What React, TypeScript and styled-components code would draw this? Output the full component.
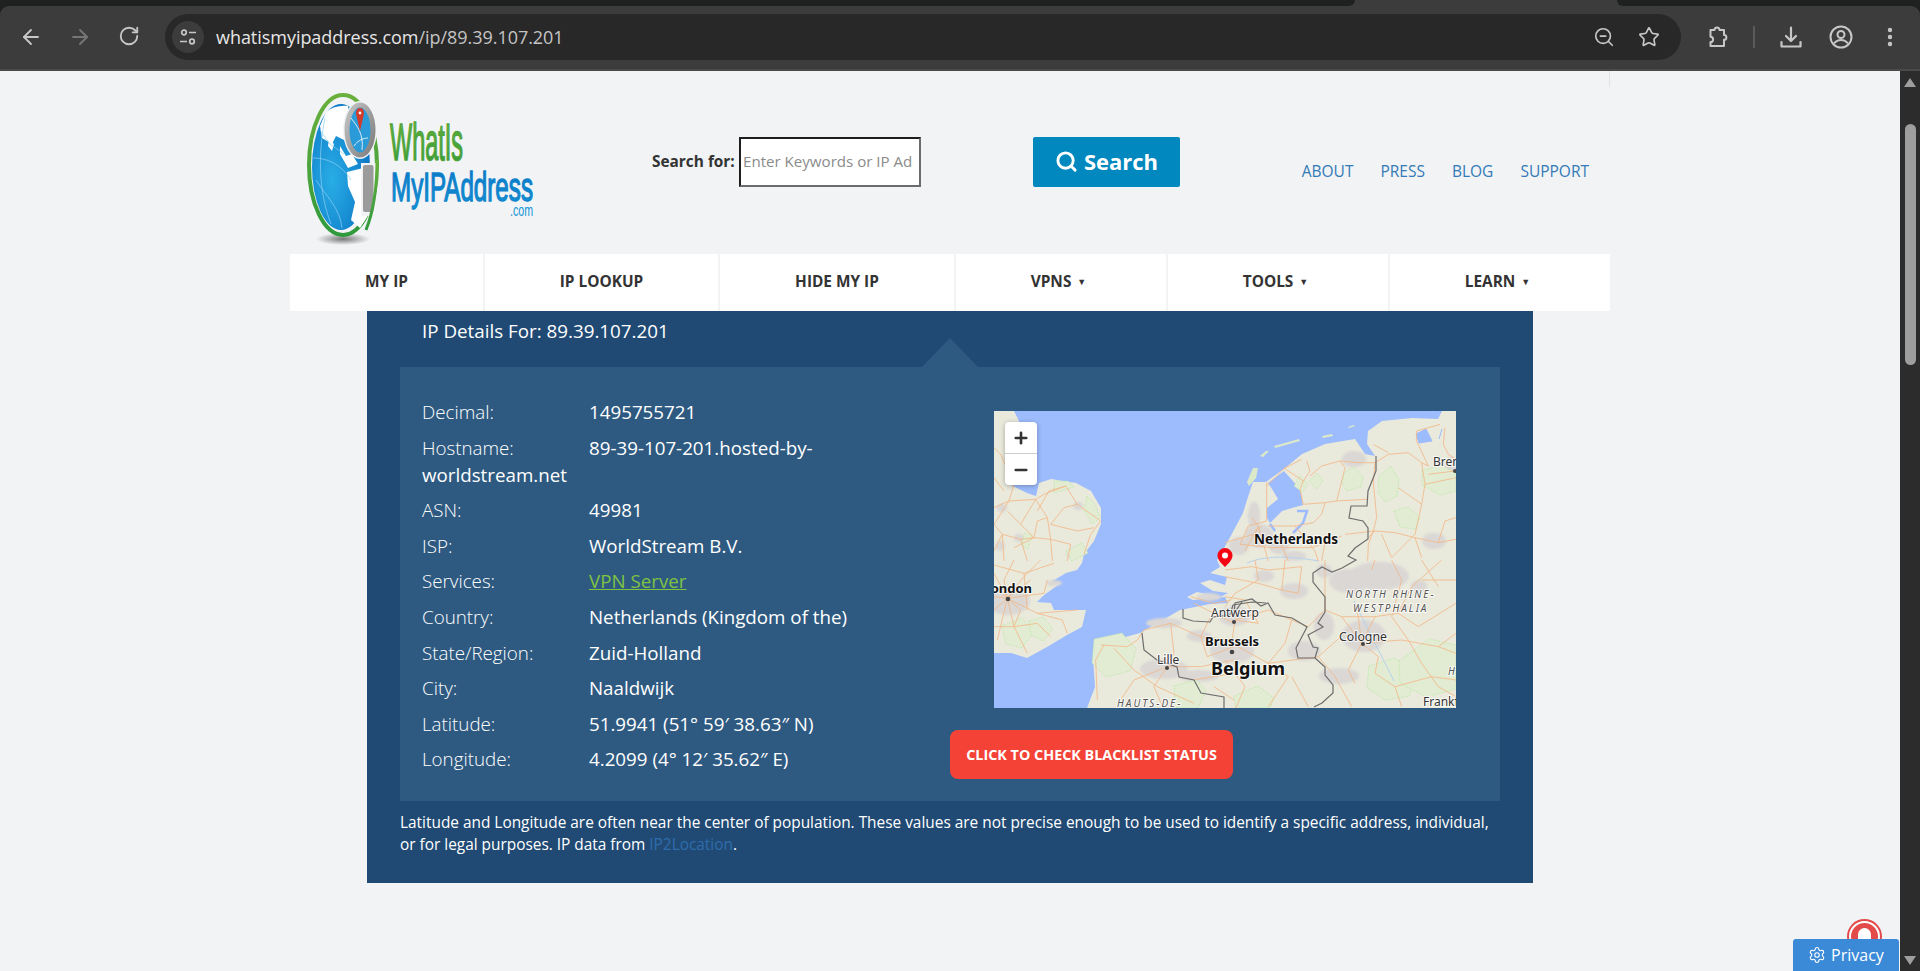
import { ArrowLeft, ArrowRight, EllipsisVertical, Minus, Plus, RotateCw, Search, Settings, Star, ZoomOut } from "lucide-react"
import styled, { createGlobalStyle } from "styled-components"

const GlobalStyle = createGlobalStyle`
  html, body {
    margin: 0;
    padding: 0;
    height: 971px;
    overflow: hidden;
    background: #f1f3f5;
    font-family: "Open Sans", "Liberation Sans", sans-serif;
  }
  * { box-sizing: border-box; }
`

const Shell = styled.div`
  width: 1920px;
  height: 971px;
  position: relative;
  overflow: hidden;
  display: flex;
  flex-direction: column;
`

/* browser chrome */
const Chrome = styled.div`
  height: 71px;
  flex: none;
  background: #1f2120;
  display: flex;
  flex-direction: column;
`
const TabStrip = styled.div`
  height: 6px;
  background: #3c3c3c;
  display: flex;
`
const StripEnd = styled.div<{ $left?: boolean }>`
  background: #1f2120;
  height: 6px;
  ${({ $left }) => ($left ? "width: 1355px; border-bottom-right-radius: 6px;" : "margin-left: 262px; flex: 1; border-bottom-left-radius: 6px;")}
`
const Toolbar = styled.div`
  flex: 1;
  background: #3c3c3c;
  border-radius: 9px 9px 0 0;
  border-bottom: 2px solid #4a4a4a;
  display: flex;
  align-items: center;
  padding: 0 0 1px 19px;
  color: #c7c7c7;
`
const NavIcon = styled.div<{ $dim?: boolean; $gap: number }>`
  width: 24px;
  height: 24px;
  margin-right: ${({ $gap }) => $gap}px;
  color: ${({ $dim }) => ($dim ? "#767676" : "#c7c7c7")};
  display: flex;
`
const AddressBar = styled.div`
  width: 1516px;
  height: 46px;
  margin-left: -2px;
  border-radius: 23px;
  background: #282828;
  display: flex;
  align-items: center;
  padding-left: 7px;
`
const TuneChip = styled.div`
  width: 32px;
  height: 32px;
  border-radius: 50%;
  background: #3c3c3c;
  display: flex;
  align-items: center;
  justify-content: center;
`
const Url = styled.div`
  margin-left: 12px;
  font-size: 18px;
  color: #e6e6e6;
  flex: 1;
  letter-spacing: -0.04px;
  span { color: #c4c4c4; }
`
const BarIcon = styled.div<{ $gap: number }>`
  width: 22px;
  height: 22px;
  display: flex;
  margin-right: ${({ $gap }) => $gap}px;
`
const ToolIcon = styled.div<{ $gap: number }>`
  width: 24px;
  height: 24px;
  display: flex;
  flex: none;
  margin-left: ${({ $gap }) => $gap}px;
`
const ToolDivider = styled.div`
  width: 2px;
  height: 22px;
  margin-left: 24px;
  background: #5a5a5a;
`

/* page */
const Viewport = styled.div`
  flex: 1;
  display: flex;
  min-height: 0;
`
const Page = styled.main`
  flex: 1;
  background: #f1f3f5;
`
const Wrap = styled.div`
  width: 1320px;
  margin: 0 auto;
`
const Header = styled.header`
  height: 183px;
  position: relative;
  display: flex;
  align-items: flex-start;
  &::after {
    content: "";
    position: absolute;
    top: 0;
    right: 0;
    width: 1px;
    height: 16px;
    background: #e0e3e6;
  }
`
const LogoBox = styled.div`
  width: 240px;
  height: 155px;
  margin: 19px 0 0 10px;
  flex: none;
`
const SearchForm = styled.form`
  display: flex;
  align-items: center;
  margin: 66px 0 0 112px;
`
const SearchLabel = styled.label`
  font-size: 15.4px;
  font-weight: 700;
  color: #333;
  width: 87px;
  padding-bottom: 2px;
  white-space: nowrap;
`
const SearchInput = styled.input`
  width: 182px;
  height: 50px;
  padding: 0 6px 2px 2px;
  border: 2px solid;
  border-color: #1e1e1e #6c6c6c #6c6c6c #1e1e1e;
  background: #fff;
  font-family: inherit;
  font-size: 15.1px;
  &::placeholder { color: #8b8b8b; opacity: 1; }
`
const SearchButton = styled.button`
  width: 147px;
  height: 50px;
  margin-left: 112px;
  padding: 0 0 2px;
  border: 0;
  border-radius: 2px;
  background: #0088bf;
  color: #fff;
  font-family: inherit;
  font-size: 22px;
  font-weight: 700;
  display: flex;
  align-items: center;
  justify-content: center;
  gap: 6px;
`
const TopLinks = styled.nav`
  display: flex;
  gap: 27px;
  margin: 89px 21px 0 auto;
`
const TopLink = styled.a`
  font-size: 15.5px;
  color: #337ab7;
  text-decoration: none;
`
const MainNav = styled.nav`
  height: 57px;
  background: #fff;
  display: flex;
`
const NavItem = styled.div<{ $width: number; $last?: boolean; $caret?: boolean }>`
  width: ${({ $width }) => $width}px;
  border-right: ${({ $last }) => ($last ? "0" : "2px solid #f1f3f5")};
  display: flex;
  align-items: center;
  justify-content: center;
  gap: 6px;
  padding: 0 ${({ $caret }) => ($caret ? "5px" : "0")} 2px 0;
  font-size: 15.4px;
  font-weight: 700;
  color: #333;
  small { font-size: 9px; }
`
const Panel = styled.section`
  width: 1166px;
  height: 572px;
  margin: 0 auto;
  background: #204a74;
  color: #fff;
`
const PanelTitle = styled.h2`
  margin: 0 0 16px;
  padding-left: 55px;
  height: 40px;
  line-height: 40px;
  font-size: 18.8px;
  font-weight: 400;
`
const Inner = styled.div`
  margin: 0 33px;
  height: 434px;
  background: #2e5a81;
  padding: 31px 22px;
  display: flex;
  position: relative;
  &::before {
    content: "";
    position: absolute;
    top: -29px;
    left: 522px;
    width: 56px;
    height: 29px;
    background: #2e5a81;
    clip-path: polygon(50% 0, 100% 100%, 0 100%);
  }
`
const DetailList = styled.div`
  width: 528px;
  flex: none;
`
const DetailRow = styled.div`
  font-size: 18.75px;
  line-height: 27px;
  margin-bottom: 8.6px;
  padding-right: 60px;
`
const DetailLabel = styled.span`
  display: inline-block;
  width: 167px;
  font-weight: 300;
`
const GreenLink = styled.a`
  color: #7fc241;
  text-decoration: underline;
`
const MapColumn = styled.div`
  padding-top: 13px;
`
const MapFrame = styled.div`
  width: 462px;
  height: 297px;
  margin-left: 44px;
  position: relative;
  overflow: hidden;
  background: #9dbcfe;
  svg { display: block; }
`
const ZoomControl = styled.div`
  position: absolute;
  top: 11px;
  left: 11px;
  width: 32px;
  height: 63px;
  border-radius: 4px;
  background: #fff;
  box-shadow: 0 1px 5px rgba(0, 0, 0, 0.3);
  color: #333;
  display: flex;
  flex-direction: column;
`
const ZoomButton = styled.div<{ $top?: boolean }>`
  flex: 1;
  display: flex;
  align-items: center;
  justify-content: center;
  border-bottom: ${({ $top }) => ($top ? "1px solid #ccc" : "0")};
`
const BlacklistButton = styled.button`
  display: block;
  width: 283px;
  height: 49px;
  margin-top: 22px;
  border: 0;
  border-radius: 8px;
  background: #f44336;
  color: #fff;
  font-family: inherit;
  font-size: 14.35px;
  font-weight: 700;
`
const Footnote = styled.p`
  margin: 11px 33px 0;
  font-size: 15.4px;
  line-height: 22px;
  a { color: #2e6dad; text-decoration: none; }
`

/* scrollbar */
const Scrollbar = styled.div`
  width: 20px;
  flex: none;
  background: #2c2c2c;
  display: flex;
  flex-direction: column;
  align-items: center;
`
const ScrollArrow = styled.div<{ $down?: boolean }>`
  width: 0;
  height: 0;
  border-left: 6px solid transparent;
  border-right: 6px solid transparent;
  ${({ $down }) => ($down ? "border-top: 9px solid #9e9e9e; margin-top: auto; margin-bottom: 6px;" : "border-bottom: 9px solid #9e9e9e; margin-top: 7px;")}
`
const ScrollThumb = styled.div`
  width: 11px;
  height: 241px;
  margin-top: 37px;
  border-radius: 6px;
  background: #9e9e9e;
`

/* overlays */
const BellBadge = styled.div`
  position: absolute;
  right: 38px;
  bottom: 17px;
  width: 35px;
  height: 35px;
  border-radius: 50%;
  background: #e34a4a;
  display: flex;
  align-items: center;
  justify-content: center;
  &::before {
    content: "";
    width: 27px;
    height: 27px;
    border-radius: 50%;
    border: 2px solid #fff;
  }
  &::after {
    content: "";
    position: absolute;
    top: 9px;
    left: 11px;
    width: 13px;
    height: 22px;
    border-radius: 7px 7px 0 0;
    background: #fff;
  }
`
const PrivacyBadge = styled.div`
  position: absolute;
  right: 21px;
  bottom: 0;
  width: 106px;
  height: 32px;
  border-radius: 3px 3px 0 0;
  background: #3a8ad8;
  color: #fff;
  font-size: 16px;
  display: flex;
  align-items: center;
  justify-content: center;
  gap: 5px;
`

const navItems = [
  { label: "MY IP", width: 195 },
  { label: "IP LOOKUP", width: 235 },
  { label: "HIDE MY IP", width: 236 },
  { label: "VPNS", width: 212, caret: true },
  { label: "TOOLS", width: 222, caret: true },
  { label: "LEARN", width: 220, caret: true, last: true },
]

const details = [
  { label: "Decimal:", value: "1495755721" },
  { label: "Hostname:", value: "89-39-107-201.hosted-by-worldstream.net" },
  { label: "ASN:", value: "49981" },
  { label: "ISP:", value: "WorldStream B.V." },
  { label: "Services:", value: "VPN Server", link: true },
  { label: "Country:", value: "Netherlands (Kingdom of the)" },
  { label: "State/Region:", value: "Zuid-Holland" },
  { label: "City:", value: "Naaldwijk" },
  { label: "Latitude:", value: "51.9941 (51° 59′ 38.63″ N)" },
  { label: "Longitude:", value: "4.2099 (4° 12′ 35.62″ E)" },
]

const TuneIcon = () => (
  <svg width="18" height="18" viewBox="0 0 18 18" fill="none" stroke="#c7c7c7" strokeWidth="1.7">
    <circle cx="5" cy="4.5" r="2.3" />
    <path d="M10 4.5h7M1 13.5h7" />
    <circle cx="13" cy="13.5" r="2.3" />
  </svg>
)

const PuzzleIcon = () => (
  <svg width="24" height="24" viewBox="0 0 24 24" fill="none" stroke="#c7c7c7" strokeWidth="2" strokeLinejoin="round">
    <path d="M9.5 5a2.5 2.5 0 0 1 5 0h4.5v5a2.4 2.4 0 0 1 0 4.8V21H5.5v-4a2.6 2.6 0 0 0 0-5.2V5z" />
  </svg>
)

const DownloadIcon = () => (
  <svg width="24" height="24" viewBox="0 0 24 24" fill="none" stroke="#c7c7c7" strokeWidth="2.2" strokeLinecap="round" strokeLinejoin="round">
    <path d="M12 2.5v13M7 11l5 5 5-5" />
    <path d="M2.5 17v4.5h19V17" />
  </svg>
)

const ProfileIcon = () => (
  <svg width="24" height="24" viewBox="0 0 24 24" fill="none" stroke="#c7c7c7" strokeWidth="2">
    <circle cx="12" cy="12" r="10.5" />
    <circle cx="12" cy="9.5" r="3.5" />
    <path d="M5 18.5c2-2.6 4.4-3.5 7-3.5s5 .9 7 3.5" />
  </svg>
)

const Logo = () => (
  <svg width="240" height="155" viewBox="300 90 240 155">
    <defs>
      <linearGradient id="logoGreen" x1="0" y1="0" x2="0" y2="1">
        <stop offset="0" stopColor="#6ab03c" />
        <stop offset="1" stopColor="#2f9a3c" />
      </linearGradient>
      <linearGradient id="logoBlue" x1="0" y1="0" x2="0" y2="1">
        <stop offset="0" stopColor="#0a6fc0" />
        <stop offset="1" stopColor="#1295d8" />
      </linearGradient>
      <linearGradient id="logoRing" x1="0" y1="0" x2="1" y2="1">
        <stop offset="0" stopColor="#c4c4c4" />
        <stop offset="1" stopColor="#7d7d7d" />
      </linearGradient>
      <radialGradient id="logoGlobe" cx="0.35" cy="0.6" r="0.7">
        <stop offset="0" stopColor="#29aee6" />
        <stop offset="1" stopColor="#0a74c4" />
      </radialGradient>
      <radialGradient id="logoShadow">
        <stop offset="0" stopColor="#777" />
        <stop offset="1" stopColor="#f1f3f5" />
      </radialGradient>
    </defs>
    <ellipse cx="343" cy="239" rx="27" ry="6" fill="url(#logoShadow)" />
    <ellipse cx="343" cy="165" rx="34" ry="70" fill="none" stroke="url(#logoGreen)" strokeWidth="4" />
    <ellipse cx="341" cy="167" rx="29" ry="63" fill="url(#logoGlobe)" />
    <path d="M326 112c6-5 14-7 22-6l2 14-4 8-2 12-8-4-4 8-10-6-2-12z" fill="#fff" />
    <path d="M340 146l6 10 6-2 6 10-10 4-8-14zM329 139l5 5-2 7-4-5z" fill="#fff" />
    <path d="M347 172l24-6 2 42-13 20-9-8 4-18-7-16z" fill="#fff" />
    <path d="M320 130l10 14 14 10M316 180c10 16 24 28 26 48M313 158c14 0 28 6 38 22M325 118c-6 30-8 70 6 106" fill="none" stroke="#8fd0f0" strokeWidth="0.7" />
    <ellipse cx="360" cy="130" rx="17" ry="29" fill="#f1f3f5" />
    <ellipse cx="360" cy="130" rx="13" ry="25" fill="#2a9ad8" stroke="url(#logoRing)" strokeWidth="5" />
    <path d="M351 118c6 8 13 16 11 32M354 146c4-6 10-8 14-8" fill="none" stroke="#fff" strokeWidth="0.8" />
    <path d="M360 108c4 0 4.500 5 3.500 8l-3.500 15-3.500-15c-1-3-.5-8 3.500-8z" fill="#d23a2c" />
    <circle cx="360" cy="113" r="1.400" fill="#fff" />
    <rect x="361" y="163" width="15" height="53" fill="#f1f3f5" />
    <rect x="363" y="165" width="10.500" height="47" rx="2" fill="#9b9b9b" />
    <path d="M377 160c0 25-3 50-11 70" fill="none" stroke="url(#logoGreen)" strokeWidth="3" />
    <text transform="translate(390 160) scale(1 1.92)" fontFamily="Liberation Sans" fontSize="27" textLength="73" lengthAdjust="spacingAndGlyphs" fill="url(#logoGreen)" stroke="#4ea438" strokeWidth="0.8">
      WhatIs
    </text>
    <text transform="translate(391 201) scale(1 1.56)" fontFamily="Liberation Sans" fontSize="26" textLength="142" lengthAdjust="spacingAndGlyphs" fill="url(#logoBlue)" stroke="#0f84cc" strokeWidth="0.9">
      MyIPAddress
    </text>
    <text transform="translate(510 216) scale(1 1.45)" fontFamily="Liberation Sans" fontSize="11" textLength="23" lengthAdjust="spacingAndGlyphs" fill="#1295d8">
      .com
    </text>
  </svg>
)

const seaAndLand = {
  england:
    "M0 0L20 0 25 10 25 30 16 60 17 74 33 82 42 85 45 72 57 68 82 72 97 80 107 97 107 113 100 130 90 143 88 152 83 159 72 162 57 171 67 172 50 184 43 191 57 192 60 199 77 199 92 199 88 216 73 224 53 236 33 247 17 242 0 242Z",
  continent:
    "M93 297L101 276 99 246 109 232 146 222 186 199 216 193 234 192 231 186 199 189 193 186 203 181 226 186 234 182 219 180 206 172 216 169 231 174 233 166 216 162 226 156 223 149 233 132 249 102 253 89 259 71 272 71 291 57 308 43 331 33 361 28 371 43 381 45 373 33 374 20 388 10 418 7 444 8 448 0 462 0 462 297Z",
}

const urban = [
  [245, 135, 10, 9], [265, 125, 14, 12], [260, 105, 6, 14], [285, 135, 10, 8], [240, 205, 16, 10], [238, 240, 22, 12],
  [205, 225, 12, 6], [170, 258, 24, 10], [355, 170, 20, 12], [385, 165, 30, 14], [370, 225, 22, 16], [310, 240, 16, 10],
  [300, 180, 14, 8], [330, 215, 10, 14], [440, 130, 12, 8], [458, 60, 8, 14], [360, 48, 12, 8], [14, 190, 22, 14],
  [78, 143, 5, 4], [84, 95, 5, 4], [8, 97, 5, 4], [25, 127, 5, 4], [6, 135, 5, 5], [170, 212, 18, 5], [215, 186, 12, 4],
  [330, 160, 8, 7], [270, 165, 10, 6], [345, 265, 20, 8], [425, 175, 8, 6], [300, 145, 12, 5], [60, 172, 8, 3], [205, 265, 20, 6],
]

const forests = [
  "M350 62l10-6 9 10-2 10-14 4-5-8z", "M385 65l12-10 8 14-2 16-12 6-7-10z", "M400 100l14-4 12 10-4 12-16-2z",
  "M428 60l18-6 16 8v18l-16 4-18-10z", "M315 70l8-8 6 8-6 8zM300 75l6-10 8 8-6 8z", "M100 228l28-6 14 16-6 22-24 6-14-14z",
  "M375 255l26-8 22 14-8 24-24 4-18-12z", "M8 215l20-8 12 14-12 16-16-4z", "M35 210l14-4 10 12-10 12-12-6z",
  "M93 85l8 8 5 14-8 6-8-14z", "M60 70l14 0 6 6-20 6z", "M405 250l30-22 27 6v44l-30 8-26-14z", "M180 275l22-6 10 10-8 18h-22z",
  "M240 285l24-10 16 12-4 10h-34z", "M30 122l8 2-4 14-6-4z", "M72 140l16-8 6 10-16 8z",
]

/* roads traced tile by tile from the 3x map crops */
const roadTiles: { x: number; y: number; roads: string[] }[] = [
  {
    x: 0,
    y: 0,
    roads: [
      "0,290 45,270 125,265 80,340 120,380 170,385 230,400 220,450",
      "125,265 160,320 170,385 175,450",
      "170,340 210,290 250,280 215,225 150,250 125,265",
      "250,280 320,330 290,370 270,430",
      "170,340 250,360 300,350",
      "45,270 60,220 20,130 0,110",
      "45,270 0,340 25,370 80,385 120,380",
      "25,370 30,450",
      "80,385 100,450",
      "0,200 30,240",
      "80,340 40,300",
      "215,225 165,240 130,300",
      "120,380 130,330 160,320",
      "60,410 120,380",
      "0,420 25,370",
    ],
  },
  {
    x: 231,
    y: 0,
    roads: [
      "45,400 70,345 125,330 125,215",
      "125,225 178,172 230,145",
      "178,172 235,210 225,235 235,280",
      "235,210 255,180 245,150",
      "255,195 290,165 345,150 360,170 335,270",
      "345,150 400,155 450,155 490,130 550,125 590,155 610,165",
      "335,270 300,275 235,280",
      "300,275 290,310 265,335 210,345 130,345",
      "335,270 425,265",
      "450,155 445,215 455,320 445,360 430,400 428,450",
      "360,370 450,360 510,365 570,380 640,395 693,385",
      "590,155 600,220 590,280 570,370 500,440",
      "610,165 575,90 575,60 645,40",
      "660,50 655,100 670,130 693,145",
      "690,180 610,190",
      "600,220 693,200",
      "570,380 590,440",
      "0,395 85,370 110,345",
      "45,400 140,410 260,410 300,395 350,375",
      "100,345 130,450",
      "210,345 270,420 280,450",
      "430,380 450,360",
      "445,100 490,125",
      "60,420 100,345 80,320",
      "160,380 190,450",
      "520,230 590,280",
      "640,395 660,330 693,320",
      "500,440 470,370",
      "300,395 290,450",
    ],
  },
  {
    x: 0,
    y: 149,
    roads: [
      "0,110 40,115 150,100 160,60",
      "40,115 0,40",
      "40,115 90,50 140,0",
      "40,115 130,160 250,150",
      "40,115 60,200 100,280",
      "40,115 10,240",
      "0,15 90,40 180,10",
      "90,40 100,150",
      "130,160 205,180 220,220",
      "0,150 40,115 80,150 60,200",
      "450,210 530,190 620,230 720,240",
      "530,190 540,280 520,320",
      "320,255 400,260 430,240 450,210",
      "330,255 305,300 310,420",
      "360,265 420,330 490,380 600,430",
      "520,320 420,360",
      "520,320 620,320 720,300",
      "520,320 480,380 510,450",
      "600,130 660,160 720,190",
      "600,360 720,340",
      "620,230 650,170",
      "590,110 660,130 710,120",
      "40,115 30,60 60,0",
      "60,200 130,190 170,230",
      "0,200 60,200",
      "0,80 40,115 110,60",
      "620,230 640,290 720,260",
      "660,380 720,420",
      "380,420 420,360",
    ],
  },
  {
    x: 231,
    y: 149,
    roads: [
      "0,30 80,20 130,30 230,20",
      "90,0 100,60 30,100",
      "30,180 20,250",
      "0,50 100,70 170,90",
      "30,180 130,150 200,180 250,200 300,150 350,170",
      "300,150 300,0",
      "350,170 410,250 460,290 450,340",
      "410,250 530,240 640,260 693,280",
      "410,250 370,330 390,370",
      "350,170 450,170 520,160 580,200 693,130",
      "450,170 410,250",
      "390,130 400,170 410,250",
      "500,0 530,60 500,170 550,240 590,310 640,380 693,410",
      "20,250 130,310 280,290 370,210",
      "130,310 190,350 130,440",
      "280,290 330,350 380,440",
      "450,340 510,380 620,350 693,360",
      "510,380 530,440",
      "590,60 693,60",
      "440,30 450,0",
      "590,0 640,80",
      "0,110 60,120",
      "520,160 560,80 650,0",
      "30,100 0,140",
      "170,90 180,0",
      "200,180 180,250 130,310",
      "60,120 100,190 30,180",
      "0,300 60,380 30,450",
      "200,350 250,440",
      "230,20 220,100 170,90",
      "640,260 693,220",
    ],
  },
]

const borders = [
  "M382 45L382 60 374 80 373 95 357 95 355 107 369 110 374 117 374 128 361 137 354 145 362 149 348 157 338 161 328 156 319 162 319 171 331 186 331 201 324 212 329 216 314 224 319 236 324 237 321 247 304 247 302 237 313 216 298 207 281 204 274 192 267 195 258 188 241 192 240 202 248 191",
  "M321 247L331 256 331 264 339 274 339 282 328 292 320 296",
  "M189 198L189 207 199 210 216 211 219 206 236 204 239 194 258 191 272 192",
  "M148 222L150 239 163 249 183 256 185 266 200 269 207 282 230 286 230 297",
]

const labelStyle = {
  paintOrder: "stroke",
  stroke: "rgba(255,255,255,0.75)",
  strokeWidth: 2,
} as const

const MapLabel = ({ x, y, size, bold, anchor, children }: { x: number; y: number; size: number; bold?: boolean; anchor?: "end"; children: string }) => (
  <text x={x} y={y} fontFamily="Noto Sans" fontSize={size} fontWeight={bold ? 700 : 400} fill={bold ? "#111" : "#333"} textAnchor={anchor} style={labelStyle}>
    {children}
  </text>
)

const RegionLabel = ({ x, y, children }: { x: number; y: number; children: string }) => (
  <text x={x} y={y} fontFamily="Noto Sans" fontSize={10} fontStyle="italic" letterSpacing={2} fill="#555" style={labelStyle}>
    {children}
  </text>
)

const MapDrawing = () => (
  <svg width="462" height="297" viewBox="0 0 462 297">
    <g style={{ filter: "blur(0.35px)" }}>
      <rect width="462" height="297" fill="#9dbcfe" />
      <path d={seaAndLand.england} fill="#e9e9dc" />
      <path d={seaAndLand.continent} fill="#e9e9dc" />
      <g fill="#dce9c9">
        <path d="M259 57l-6 14 2 4 7-8 2-10z" />
        <path d="M266 45l6-5 3 0-6 6zM280 35l25-7 1 2-25 7zM328 25l10-2 1 2-10 2zM354 16l6-2 1 1-6 2z" />
      </g>
      <path d="M274 72L290 60 306 78 309 94 298 97 288 100 276 112 273 107 273 97 284 88 278 78Z" fill="#9dbcfe" />
      <path d="M303 100L313 100 309 112 299 122M276 113L281 120" fill="none" stroke="#9dbcfe" strokeWidth="2.500" />
      <path d="M422 23l10-5 6 12-13 2zM448 18l-3 10" fill="#9dbcfe" stroke="#9dbcfe" />
      <g fill="#dad7d5" style={{ filter: "blur(1.2px)" }}>
        {urban.map(([cx, cy, rx, ry]) => (
          <ellipse key={`${cx}-${cy}`} cx={cx} cy={cy} rx={rx} ry={ry} />
        ))}
      </g>
      <g fill="#e2ecd3" stroke="#a9e493" strokeWidth="0.8" strokeDasharray="1 1.5">
        {forests.map((d) => (
          <path key={d} d={d} />
        ))}
      </g>
      <path d="M253 152C275 143 300 146 325 150M360 190C372 215 385 240 400 270" fill="none" stroke="#b5d2ee" strokeWidth="1" />
      {roadTiles.map((tile) => (
        <g key={`${tile.x}-${tile.y}`} transform={`translate(${tile.x} ${tile.y}) scale(0.3333)`} fill="none" stroke="#f2b98a" strokeWidth="2.600">
          {tile.roads.map((points) => (
            <polyline key={points} points={points} />
          ))}
        </g>
      ))}
      <g fill="none" stroke="#6d6d6d" strokeWidth="1.200">
        {borders.map((d) => (
          <path key={d} d={d} />
        ))}
      </g>
    </g>
    <g fill="#444">
      <circle cx="14" cy="188" r="2.300" />
      <circle cx="240" cy="211" r="2" />
      <circle cx="238" cy="241" r="2.300" />
      <circle cx="173" cy="257" r="2" />
      <circle cx="369" cy="233" r="2" />
      <circle cx="461" cy="60" r="2" />
    </g>
    <MapLabel x={260} y={133} size={13.500} bold>Netherlands</MapLabel>
    <MapLabel x={38} y={182} size={13} bold anchor="end">London</MapLabel>
    <MapLabel x={217} y={206} size={12}>Antwerp</MapLabel>
    <MapLabel x={211} y={235} size={13} bold>Brussels</MapLabel>
    <MapLabel x={217} y={264} size={18} bold>Belgium</MapLabel>
    <MapLabel x={163} y={253} size={12}>Lille</MapLabel>
    <MapLabel x={345} y={230} size={12.300}>Cologne</MapLabel>
    <MapLabel x={439} y={55} size={12}>Bremen</MapLabel>
    <MapLabel x={429} y={295} size={12}>Frankfurt</MapLabel>
    <RegionLabel x={352} y={187}>NORTH RHINE-</RegionLabel>
    <RegionLabel x={359} y={201}>WESTPHALIA</RegionLabel>
    <RegionLabel x={123} y={296}>HAUTS-DE-</RegionLabel>
    <RegionLabel x={454} y={264}>H</RegionLabel>
    <path d="M231 137a7.500 7.500 0 0 1 7.500 7.500c0 4-3.500 7.500-7.500 11.500-4-4-7.500-7.500-7.500-11.500A7.500 7.500 0 0 1 231 137z" fill="#f40612" />
    <circle cx="231" cy="144.500" r="3" fill="#fff" />
  </svg>
)

const App = () => {
  return (
    <Shell>
      <GlobalStyle />
      <Chrome>
        <TabStrip>
          <StripEnd $left />
          <StripEnd />
        </TabStrip>
        <Toolbar>
          <NavIcon $gap={25}><ArrowLeft size={24} strokeWidth={1.800} /></NavIcon>
          <NavIcon $gap={26} $dim><ArrowRight size={24} strokeWidth={1.800} /></NavIcon>
          <NavIcon $gap={25}><RotateCw size={22} strokeWidth={2} /></NavIcon>
          <AddressBar>
            <TuneChip><TuneIcon /></TuneChip>
            <Url>whatismyipaddress.com<span>/ip/89.39.107.201</span></Url>
            <BarIcon $gap={23}><ZoomOut size={22} strokeWidth={1.800} /></BarIcon>
            <BarIcon $gap={21}><Star size={22} strokeWidth={1.800} /></BarIcon>
          </AddressBar>
          <ToolIcon $gap={24}><PuzzleIcon /></ToolIcon>
          <ToolDivider />
          <ToolIcon $gap={24}><DownloadIcon /></ToolIcon>
          <ToolIcon $gap={26}><ProfileIcon /></ToolIcon>
          <ToolIcon $gap={25}><EllipsisVertical size={24} strokeWidth={2.400} /></ToolIcon>
        </Toolbar>
      </Chrome>
      <Viewport>
        <Page>
          <Wrap>
            <Header>
              <LogoBox><Logo /></LogoBox>
              <SearchForm>
                <SearchLabel>Search for:</SearchLabel>
                <SearchInput placeholder="Enter Keywords or IP Address" />
                <SearchButton type="button">
                  <Search size={23} strokeWidth={3} />
                  Search
                </SearchButton>
              </SearchForm>
              <TopLinks>
                {["ABOUT", "PRESS", "BLOG", "SUPPORT"].map((link) => (
                  <TopLink key={link}>{link}</TopLink>
                ))}
              </TopLinks>
            </Header>
            <MainNav>
              {navItems.map((item) => (
                <NavItem key={item.label} $width={item.width} $last={item.last} $caret={item.caret}>
                  {item.label}
                  {item.caret ? <small>▼</small> : null}
                </NavItem>
              ))}
            </MainNav>
          </Wrap>
          <Panel>
            <PanelTitle>IP Details For: 89.39.107.201</PanelTitle>
            <Inner>
              <DetailList>
                {details.map((row) => (
                  <DetailRow key={row.label}>
                    <DetailLabel>{row.label}</DetailLabel>
                    {row.link ? <GreenLink>{row.value}</GreenLink> : row.value}
                  </DetailRow>
                ))}
              </DetailList>
              <MapColumn>
                <MapFrame>
                  <MapDrawing />
                  <ZoomControl>
                    <ZoomButton $top><Plus size={18} strokeWidth={3.500} /></ZoomButton>
                    <ZoomButton><Minus size={18} strokeWidth={3.500} /></ZoomButton>
                  </ZoomControl>
                </MapFrame>
                <BlacklistButton>CLICK TO CHECK BLACKLIST STATUS</BlacklistButton>
              </MapColumn>
            </Inner>
            <Footnote>
              Latitude and Longitude are often near the center of population. These values are not precise enough to be used to identify a specific address, individual, or for legal purposes. IP data from <a>IP2Location</a>.
            </Footnote>
          </Panel>
        </Page>
        <Scrollbar>
          <ScrollArrow />
          <ScrollThumb />
          <ScrollArrow $down />
        </Scrollbar>
      </Viewport>
      <BellBadge />
      <PrivacyBadge>
        <Settings size={18} strokeWidth={1.500} />
        Privacy
      </PrivacyBadge>
    </Shell>
  )
}

export default App
